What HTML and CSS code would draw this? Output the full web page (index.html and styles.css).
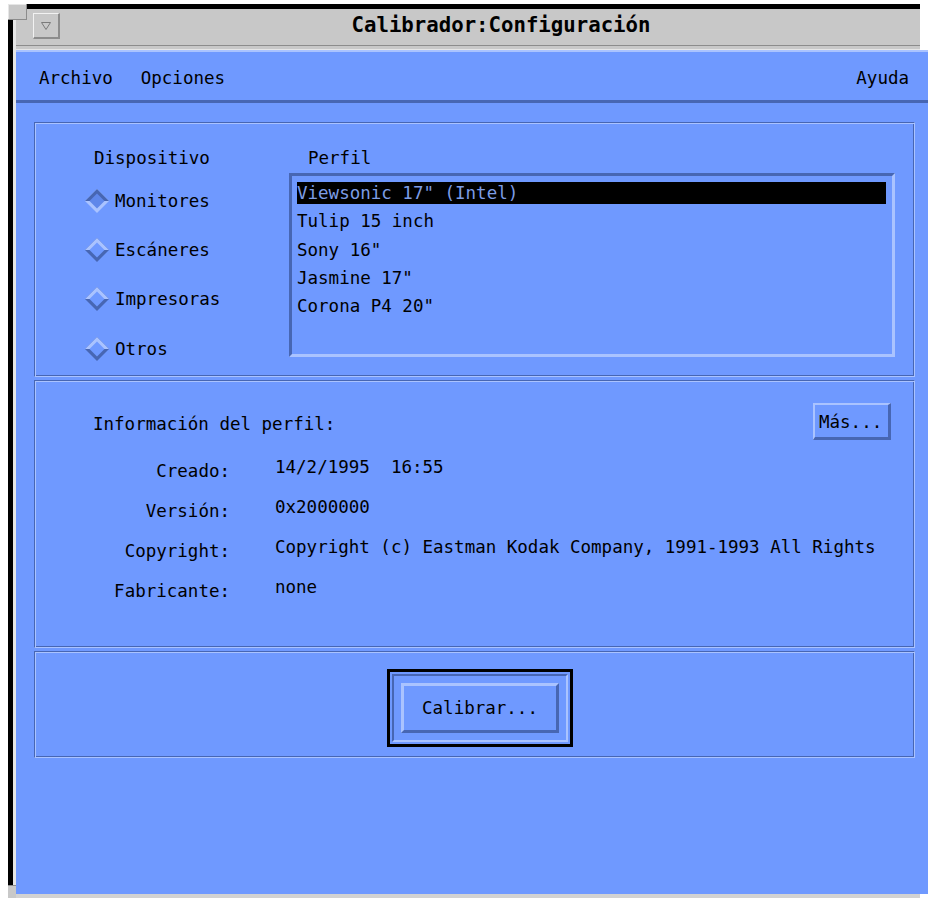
FILE: index.html
```html
<!DOCTYPE html>
<html lang="es">
<head>
<meta charset="utf-8">
<title>Calibrador:Configuración</title>
<link rel="stylesheet" href="styles.css">
</head>
<body>
<div class="window">
  <div class="corner corner-top"></div>
  <div class="corner corner-bottom"></div>
  <div class="frame-top"></div>
  <header class="titlebar">
    <div class="menu-btn">
      <svg width="10" height="8" viewBox="0 0 10 8"><polygon points="0.5,0.5 9.5,0.5 5,7.5" fill="none" stroke="#7a7a7a" stroke-width="1"/></svg>
    </div>
    <div class="title">Calibrador:Configuración</div>
  </header>
  <div class="client">
    <nav class="menubar">
      <span class="menu-item">Archivo</span>
      <span class="menu-item">Opciones</span>
      <span class="menu-item help">Ayuda</span>
    </nav>
    <div class="panels">
      <section class="panel panel-select">
        <div class="device-col">
          <div class="group-label device-label">Dispositivo</div>
          <ul class="radios">
            <li class="radio checked"><svg class="diamond" width="24" height="24" viewBox="0 0 24 24"><polygon class="lo" points="0,12 12,0 24,12 12,24"/><polygon class="hi" points="0,12 12,0 24,12"/><polygon class="fill" points="12,4.5 19.5,12 12,19.5 4.5,12"/></svg><span>Monitores</span></li>
            <li class="radio"><svg class="diamond" width="24" height="24" viewBox="0 0 24 24"><polygon class="lo" points="0,12 12,0 24,12 12,24"/><polygon class="hi" points="0,12 12,0 24,12"/><polygon class="fill" points="12,4.5 19.5,12 12,19.5 4.5,12"/></svg><span>Escáneres</span></li>
            <li class="radio"><svg class="diamond" width="24" height="24" viewBox="0 0 24 24"><polygon class="lo" points="0,12 12,0 24,12 12,24"/><polygon class="hi" points="0,12 12,0 24,12"/><polygon class="fill" points="12,4.5 19.5,12 12,19.5 4.5,12"/></svg><span>Impresoras</span></li>
            <li class="radio"><svg class="diamond" width="24" height="24" viewBox="0 0 24 24"><polygon class="lo" points="0,12 12,0 24,12 12,24"/><polygon class="hi" points="0,12 12,0 24,12"/><polygon class="fill" points="12,4.5 19.5,12 12,19.5 4.5,12"/></svg><span>Otros</span></li>
          </ul>
        </div>
        <div class="profile-col">
          <div class="group-label profile-label">Perfil</div>
          <ul class="listbox">
            <li class="selected">Viewsonic 17" (Intel)</li>
            <li>Tulip 15 inch</li>
            <li>Sony 16"</li>
            <li>Jasmine 17"</li>
            <li>Corona P4 20"</li>
          </ul>
        </div>
      </section>
      <section class="panel panel-info">
        <div class="info-head">
          <div class="info-title">Información del perfil:</div>
          <button class="btn btn-more">Más...</button>
        </div>
        <dl class="info-grid">
          <dt>Creado:</dt><dd>14/2/1995&nbsp;&nbsp;16:55</dd>
          <dt>Versión:</dt><dd>0x2000000</dd>
          <dt>Copyright:</dt><dd>Copyright (c) Eastman Kodak Company, 1991-1993 All Rights</dd>
          <dt>Fabricante:</dt><dd>none</dd>
        </dl>
      </section>
      <section class="panel panel-actions">
        <div class="default-frame">
          <div class="default-ring">
            <button class="btn btn-calibrate">Calibrar...</button>
          </div>
        </div>
      </section>
    </div>
  </div>
  <div class="frame-bottom"></div>
</div>
</body>
</html>
```

FILE: styles.css
```css
:root {
  --blue: #6f99ff;
  --blue-light: #aac3ff;
  --blue-dark: #4766b3;
  --blue-deep: #5f87ea;
  --gray: #c8c8c8;
  --gray-light: #e6e6e6;
  --gray-dark: #8c8c8c;
}

* { box-sizing: border-box; }

html, body {
  margin: 0;
  padding: 0;
  background: #fff;
}

body {
  width: 928px;
  height: 898px;
  overflow: hidden;
  font-family: "DejaVu Sans Mono", "Liberation Mono", monospace;
  font-size: 17.5px;
  color: #000;
}

ul, dl, dd { margin: 0; padding: 0; list-style: none; }

/* window frame */
.window {
  position: relative;
  margin: 4px 0 0 8px;
  height: 894px;
  border-left: 5px solid #000;
  display: flex;
  flex-direction: column;
}

.frame-top {
  height: 5px;
  background: #000;
  margin-right: 8px;
}

.corner {
  position: absolute;
  left: -5px;
  background: var(--gray);
}
.corner-top {
  top: 0;
  width: 19px;
  height: 16px;
  border-right: 1px solid var(--gray-dark);
  border-bottom: 1px solid var(--gray-dark);
  box-shadow: inset 1px 1px 0 var(--gray-light);
}
.corner-bottom {
  bottom: 0;
  width: 8px;
  height: 13px;
  border-top: 1px solid var(--gray-dark);
}

.titlebar {
  height: 41px;
  margin-right: 8px;
  background: var(--gray);
  border-left: 3px solid var(--gray-light);
  border-bottom: 1px solid var(--gray-light);
  box-shadow: inset 0 -3px 0 var(--gray), inset 0 -4px 0 var(--gray-dark);
  display: flex;
  align-items: flex-start;
  padding: 4px 0 0 17px;
}

.menu-btn {
  width: 27px;
  height: 26px;
  background: var(--gray);
  border-top: 1px solid #f2f2f2;
  border-left: 1px solid #f2f2f2;
  border-right: 2px solid var(--gray-dark);
  border-bottom: 2px solid var(--gray-dark);
  display: flex;
  align-items: center;
  justify-content: center;
}

.title {
  flex: 1;
  text-align: center;
  padding-left: 22px;
  font-family: "DejaVu Sans Mono", monospace;
  font-weight: bold;
  font-size: 20.7px;
  line-height: 24px;
  letter-spacing: 0;
}

/* client area */
.client {
  flex: 1;
  background: var(--blue);
  border-left: 3px solid var(--gray-light);
  display: flex;
  flex-direction: column;
}

.menubar {
  height: 53px;
  border-top: 2px solid var(--blue-light);
  border-bottom: 3px solid var(--blue-dark);
  display: flex;
  align-items: center;
  gap: 28px;
  padding: 3px 19px 0 23px;
}
.menu-item { line-height: 20px; }
.menu-item.help { margin-left: auto; }

.panels {
  display: flex;
  flex-direction: column;
  gap: 3px;
  padding: 19px 13px 0 18px;
}

.panel {
  border: 1px solid;
  border-color: var(--blue-dark) var(--blue-light) var(--blue-light) var(--blue-dark);
  box-shadow: inset 1px 1px 0 var(--blue-light), inset -1px -1px 0 var(--blue-dark);
  padding: 1px;
}

.group-label { line-height: 20px; height: 20px; }

/* device + profile selection */
.panel-select {
  height: 255px;
  display: grid;
  grid-template-columns: 204px 606px;
  align-items: start;
  padding: 25px 0 0 50px;
}

.device-label { padding-left: 9px; }

.radios { margin-top: 8px; }
.radio {
  height: 49.3px;
  display: flex;
  align-items: center;
  gap: 6px;
  line-height: 20px;
}
.diamond { display: block; flex: none; }
.diamond .lo { fill: var(--blue-dark); }
.diamond .hi { fill: var(--blue-light); }
.diamond .fill { fill: var(--blue); }
.radio.checked .diamond .lo { fill: var(--blue-light); }
.radio.checked .diamond .hi { fill: var(--blue-dark); }
.radio.checked .diamond .fill { fill: var(--blue-deep); }

.profile-label { padding-left: 19px; }

.listbox {
  margin-top: 5px;
  height: 184px;
  border: 3px solid;
  border-color: var(--blue-dark) var(--blue-light) var(--blue-light) var(--blue-dark);
  padding: 6px 6px 0 5px;
  display: flex;
  flex-direction: column;
  gap: 6.3px;
}
.listbox li {
  height: 22px;
  line-height: 22px;
  white-space: pre;
}
.listbox li.selected {
  background: #000;
  color: #7d9de6;
}

/* profile information */
.panel-info {
  height: 268px;
  padding: 22px 23px 0 58px;
}

.info-head {
  display: flex;
  justify-content: space-between;
  align-items: flex-start;
}
.info-title {
  margin-top: 11px;
  line-height: 20px;
}

.btn {
  font: inherit;
  color: #000;
  background: var(--blue);
  border-style: solid;
  border-color: var(--blue-light) var(--blue-dark) var(--blue-dark) var(--blue-light);
  padding: 0;
  cursor: default;
}

.btn-more {
  width: 78px;
  height: 37px;
  border-width: 2px 3px 3px 2px;
  text-align: left;
  padding: 2px 0 0 4px;
  line-height: 30px;
}

.info-grid {
  margin-top: 11px;
  display: grid;
  grid-template-columns: 137px 1fr;
  grid-auto-rows: 40px;
  column-gap: 45px;
  line-height: 20px;
}
.info-grid dt {
  text-align: right;
  padding-top: 10px;
}
.info-grid dd {
  padding-top: 6px;
  white-space: nowrap;
}

/* action row */
.panel-actions {
  height: 107px;
  padding: 17px 0 0 352px;
}

.default-frame {
  width: 186px;
  height: 78px;
  border: 3px solid #000;
  padding: 2px;
}
.default-ring {
  height: 100%;
  border: 2px solid;
  border-color: var(--blue-dark) var(--blue-light) var(--blue-light) var(--blue-dark);
  padding: 7px;
}
.btn-calibrate {
  display: block;
  width: 100%;
  height: 100%;
  border-width: 3px;
  line-height: 20px;
  text-align: center;
  padding-left: 0;
}

.frame-bottom {
  height: 4px;
  background: #d2d2d2;
  margin-right: 8px;
}
```
